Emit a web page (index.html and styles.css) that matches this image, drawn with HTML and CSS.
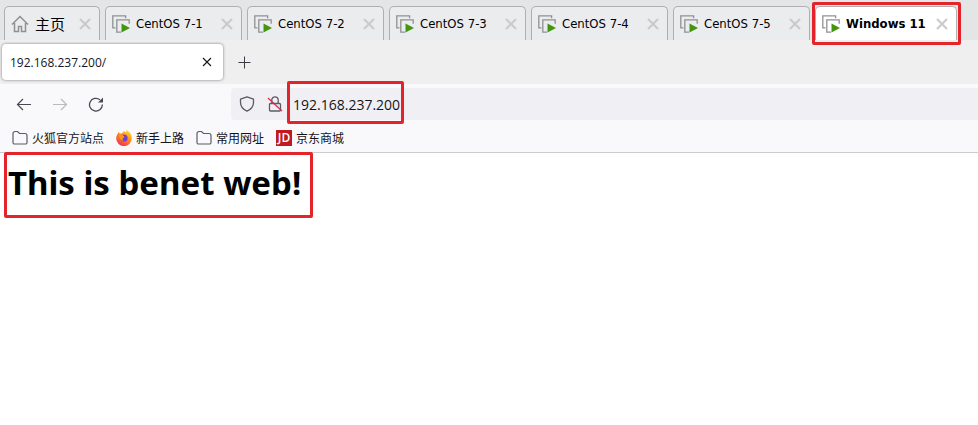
FILE: index.html
```html
<!DOCTYPE html>
<html lang="zh-CN">

<head>
    <meta charset="UTF-8">
    <meta name="viewport" content="width=device-width, initial-scale=1.0">
    <title>192.168.237.200/</title>
    <link rel="stylesheet" href="styles.css">
</head>

<body>
    <svg class="sprite" aria-hidden="true">
        <symbol id="icon-vm" viewBox="0 0 18 18">
            <path d="M3.500 12.800H.8V.8h12.800v2.400" fill="none" stroke="#8f9193" stroke-width="1.300" />
            <path d="M9 17.200H4.800V4.800h12.400v4" fill="none" stroke="#8f9193" stroke-width="1.300" />
            <path d="M9.500 8.500v9l8.500-4.500z" fill="#43960f" />
        </symbol>
        <symbol id="icon-close" viewBox="0 0 12 12">
            <path d="M1 1l10 10M11 1L1 11" fill="none" stroke="#c9cacb" stroke-width="2" />
        </symbol>
        <symbol id="icon-folder" viewBox="0 0 16 16">
            <path d="M1 12.500v-9a2 2 0 0 1 2-2h2.500l2 2H13a2 2 0 0 1 2 2v7a1.500 1.500 0 0 1-1.500 1.500h-11A1.500 1.500 0 0 1 1 12.500z" fill="none" stroke="#5b5b66" stroke-width="1.200" />
        </symbol>
    </svg>

    <nav class="vm-tabs">
        <div class="vm-tab home">
            <svg class="home-icon" viewBox="0 0 18 18">
                <path d="M1 9.500L9 1.500l8 8M3.500 8v8.500h4v-5h3v5h4V8" fill="none" stroke="#8f9193" stroke-width="1.500" />
            </svg>
            <span class="vm-name">主页</span>
            <button class="vm-close" aria-label="关闭"><svg><use href="#icon-close" /></svg></button>
        </div>
        <div class="vm-tab">
            <svg class="vm-icon"><use href="#icon-vm" /></svg>
            <span class="vm-name">CentOS 7-1</span>
            <button class="vm-close" aria-label="关闭"><svg><use href="#icon-close" /></svg></button>
        </div>
        <div class="vm-tab">
            <svg class="vm-icon"><use href="#icon-vm" /></svg>
            <span class="vm-name">CentOS 7-2</span>
            <button class="vm-close" aria-label="关闭"><svg><use href="#icon-close" /></svg></button>
        </div>
        <div class="vm-tab">
            <svg class="vm-icon"><use href="#icon-vm" /></svg>
            <span class="vm-name">CentOS 7-3</span>
            <button class="vm-close" aria-label="关闭"><svg><use href="#icon-close" /></svg></button>
        </div>
        <div class="vm-tab">
            <svg class="vm-icon"><use href="#icon-vm" /></svg>
            <span class="vm-name">CentOS 7-4</span>
            <button class="vm-close" aria-label="关闭"><svg><use href="#icon-close" /></svg></button>
        </div>
        <div class="vm-tab">
            <svg class="vm-icon"><use href="#icon-vm" /></svg>
            <span class="vm-name">CentOS 7-5</span>
            <button class="vm-close" aria-label="关闭"><svg><use href="#icon-close" /></svg></button>
        </div>
        <div class="vm-tab active">
            <svg class="vm-icon"><use href="#icon-vm" /></svg>
            <span class="vm-name">Windows 11</span>
            <button class="vm-close" aria-label="关闭"><svg><use href="#icon-close" /></svg></button>
            <span class="mark mark-tab"></span>
        </div>
    </nav>

    <div class="tab-strip">
        <div class="page-tab">
            <span>192.168.237.200/</span>
            <button class="icon-btn" aria-label="关闭标签页">
                <svg viewBox="0 0 16 16"><path d="M4 4l8 8M12 4l-8 8" fill="none" stroke="#15141a" stroke-width="1.100" /></svg>
            </button>
        </div>
        <button class="icon-btn" aria-label="新建标签页">
            <svg viewBox="0 0 16 16"><path d="M8.500 2.500v12M2.500 8.500h12" fill="none" stroke="#3c3b44" /></svg>
        </button>
    </div>

    <div class="toolbar">
        <div class="nav-buttons">
            <button class="icon-btn" aria-label="后退">
                <svg viewBox="0 0 16 16"><path d="M15 8.500H1.500M7 3L1.500 8.500 7 14" fill="none" stroke="#4a4953" stroke-width="1.200" /></svg>
            </button>
            <button class="icon-btn" aria-label="前进" disabled>
                <svg viewBox="0 0 16 16"><path d="M1 8.500h13.500M9 3l5.500 5.500L9 14" fill="none" stroke="#b9b9be" stroke-width="1.200" /></svg>
            </button>
            <button class="icon-btn" aria-label="刷新">
                <svg viewBox="0 0 16 16"><path d="M14.300 8.500A6.400 6.400 0 1 1 12 3.800" fill="none" stroke="#4a4953" stroke-width="1.300" /><path d="M15 1.500V6.500H10z" fill="#4a4953" /></svg>
            </button>
        </div>
        <div class="url-bar">
            <svg class="url-icon" viewBox="0 0 16 16">
                <path d="M8 .8l6.500 2.400v3.300c0 4-2.600 7-6.500 8.700-3.900-1.700-6.500-4.700-6.500-8.700V3.200z" fill="none" stroke="#5b5b66" stroke-width="1.300" stroke-linejoin="round" />
            </svg>
            <svg class="url-icon" viewBox="0 0 16 16">
                <path d="M4.800 7.500V4a3.200 3.200 0 0 1 6.400 0v3.500M3.500 7.500h9a1 1 0 0 1 1 1V14a1 1 0 0 1-1 1h-9a1 1 0 0 1-1-1V8.500a1 1 0 0 1 1-1z" fill="none" stroke="#5b5b66" stroke-width="1.300" />
                <path d="M1 2l14 13" stroke="#e22850" stroke-width="1.300" />
            </svg>
            <div class="url-field">
                <input type="text" value="192.168.237.200" aria-label="地址栏">
                <span class="mark mark-url"></span>
            </div>
        </div>
    </div>

    <div class="bookmarks">
        <a href="#"><svg><use href="#icon-folder" /></svg>火狐官方站点</a>
        <a href="#">
            <svg viewBox="0 0 16 16">
                <defs>
                    <linearGradient id="fox" x1=".8" y1="0" x2=".2" y2="1">
                        <stop offset="0" stop-color="#ffe226" />
                        <stop offset=".45" stop-color="#ff8a1c" />
                        <stop offset="1" stop-color="#f0285a" />
                    </linearGradient>
                </defs>
                <path d="M1.200 4.500L2.600 2l1.300 1.600L6 3.200 8 1l2 1.400L10.500 0c3 1.500 5.300 4.500 5.300 8.200A7.800 7.800 0 0 1 .2 8.500C.1 7 .5 5.600 1.200 4.500z" fill="url(#fox)" />
                <circle cx="8" cy="8" r="3.600" fill="#7a3bd0" />
                <path d="M3 5.500l3.700-.5L8.500 7 7 8.200c-1 .6-.5 2 1 2-2 1.500-4.500-.5-5-4.700z" fill="#ff980e" />
            </svg>新手上路</a>
        <a href="#"><svg><use href="#icon-folder" /></svg>常用网址</a>
        <a href="#"><span class="jd">JD</span>京东商城</a>
    </div>

    <main class="page">
        <h1>This is benet web!<span class="mark mark-title"></span></h1>
    </main>
</body>

</html>
```
FILE: styles.css
```css
* {
    margin: 0;
    padding: 0;
    box-sizing: border-box;
}

body {
    display: flex;
    flex-direction: column;
    min-height: 100vh;
    background: #fff;
    color: #15141a;
    font-family: "Open Sans", "Noto Sans CJK SC", sans-serif;
    font-size: 12px;
}

button {
    border: 0;
    background: none;
}

svg {
    display: block;
}

.sprite {
    display: none;
}

/* red highlight frames */
.mark {
    position: absolute;
    border: 3px solid #e3242b;
    border-radius: 2px;
    pointer-events: none;
}

/* virtual machine tabs */
.vm-tabs {
    display: flex;
    gap: 5px;
    height: 40px;
    padding: 6px 4px 0;
    background: #e3e5e7;
    font-family: "DejaVu Sans Condensed", "DejaVu Sans", "Noto Sans CJK SC", sans-serif;
    font-size: 13px;
}

.vm-tab {
    position: relative;
    display: flex;
    align-items: center;
    padding: 0 8px 0 6px;
    background: #ebecee;
    border: 1px solid #adafb1;
    border-bottom: 0;
    border-radius: 5px 5px 0 0;
    color: #000;
    white-space: nowrap;
    width: 137px;
}

.vm-tab.home {
    width: 96px;
}

.vm-tab.active {
    width: 142px;
    background: #fff;
    font-weight: bold;
}

.vm-icon,
.home-icon {
    width: 18px;
    height: 18px;
    margin-right: 6px;
}

.home .vm-name {
    font-size: 15px;
}

.vm-close {
    margin-left: auto;
}

.vm-close svg {
    width: 12px;
    height: 12px;
}

.mark-tab {
    top: -5px;
    right: -5px;
    bottom: -5px;
    left: -4px;
    z-index: 1;
}

/* browser tabs */
.tab-strip {
    display: flex;
    align-items: center;
    gap: 13px;
    height: 44px;
    padding: 0 2px;
    background: #efefef;
}

.page-tab {
    display: flex;
    align-items: center;
    justify-content: space-between;
    width: 221px;
    height: 36px;
    padding: 0 8px;
    background: #fff;
    border-radius: 4px;
    box-shadow: 0 0 3px rgba(0, 0, 0, .5);
}

.icon-btn svg {
    width: 16px;
    height: 16px;
}

/* navigation */
.toolbar {
    display: flex;
    align-items: center;
    height: 40px;
    background: #f9f9fb;
}

.nav-buttons {
    display: flex;
    gap: 20px;
    width: 231px;
    padding-left: 16px;
}

.url-bar {
    flex: 1;
    display: flex;
    align-items: center;
    gap: 12px;
    height: 32px;
    padding-left: 8px;
    background: #f0f0f4;
    border-radius: 4px 0 0 4px;
}

.url-icon {
    width: 16px;
    height: 16px;
}

.url-field {
    position: relative;
    flex: 1;
    margin-left: -2px;
}

.url-field input {
    width: 100%;
    height: 32px;
    border: 0;
    outline: 0;
    background: none;
    color: #15141a;
    font-family: inherit;
    font-size: 14px;
}

.mark-url {
    top: -7px;
    bottom: -4px;
    left: -6px;
    width: 117px;
}

/* bookmarks */
.bookmarks {
    display: flex;
    gap: 12px;
    height: 29px;
    padding: 0 12px;
    background: #f9f9fb;
    border-bottom: 1px solid #cccccf;
}

.bookmarks a {
    display: flex;
    align-items: center;
    gap: 4px;
    color: #15141a;
    text-decoration: none;
    white-space: nowrap;
}

.bookmarks svg,
.jd {
    width: 16px;
    height: 16px;
}

.jd {
    background: #c01920;
    color: #fff;
    font-weight: 600;
    line-height: 16px;
    text-align: center;
}

/* page content */
.page {
    flex: 1;
    padding: 8px;
}

h1 {
    position: relative;
    width: fit-content;
    color: #000;
    font-family: "Noto Sans", sans-serif;
    font-size: 33px;
    line-height: 44px;
}

.mark-title {
    top: -9px;
    right: -12px;
    bottom: -13px;
    left: -4px;
}
```
